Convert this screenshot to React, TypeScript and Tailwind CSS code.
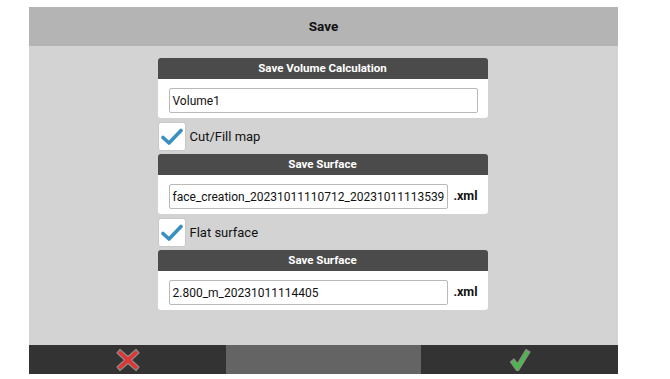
import React from 'react'

const font = { fontFamily: 'Roboto, "Liberation Sans", sans-serif' }

function Header({ title }: { title: string }) {
  return (
    <div className="h-[21px] rounded-t-[3px] bg-[#4b4b4b] flex items-center justify-center text-white text-[11.5px] font-bold">
      {title}
    </div>
  )
}

function Check({ label }: { label: string }) {
  return (
    <div className="flex items-center h-[29px] mt-[4px] mb-[3px]">
      <div className="w-[28px] h-[29px] bg-white border border-[#c8c8c8] rounded-[3px] flex items-center justify-center">
        <svg width="22" height="18" viewBox="0 0 22 18">
          <path d="M2 9.5 L8 15 L20 2.5" fill="none" stroke="#3b8fc0" strokeWidth="3.6" strokeLinecap="round" strokeLinejoin="round" />
        </svg>
      </div>
      <span className="ml-[4px] text-[13px] text-[#111]">{label}</span>
    </div>
  )
}

function Field({ value, xml }: { value: string; xml?: boolean }) {
  return (
    <div className="bg-white rounded-b-[3px] pl-[11px] pr-[10px] pt-[9px] pb-[5px] flex items-center">
      <div className={`h-[25px] border border-[#b9b9b9] rounded-[2px] flex items-center px-[3px] text-[12px] text-[#111] overflow-hidden whitespace-nowrap ${xml ? 'w-[282px]' : 'flex-1'}`}>
        {value}
      </div>
      {xml && <span className="ml-[5px] text-[12.5px] font-bold text-[#111]">.xml</span>}
    </div>
  )
}

export default function App() {
  return (
    <div className="w-[670px] h-[379px] bg-white pt-[7px] pl-[29px]" style={font}>
      <div className="w-[589px] flex flex-col">
        <div className="h-[39px] bg-[#b4b4b4] flex items-center justify-center text-[13.5px] font-bold text-[#111]">Save</div>
        <div className="h-[299px] bg-[#d3d3d3] flex flex-col items-center pt-[12px]">
          <div className="w-[330px] ml-[-2px]">
            <Header title="Save Volume Calculation" />
            <Field value="Volume1" />
            <Check label="Cut/Fill map" />
            <Header title="Save Surface" />
            <Field value="face_creation_20231011110712_20231011113539" xml />
            <Check label="Flat surface" />
            <Header title="Save Surface" />
            <Field value="2.800_m_20231011114405" xml />
          </div>
        </div>
        <div className="h-[29px] flex">
          <div className="w-[197px] bg-[#333333] flex items-center justify-center">
            <svg width="24" height="24" viewBox="0 0 24 24">
              <path d="M4 1.5 L12 8.5 L20 1.5 L23 5 L15.5 12 L23 19 L20 22.5 L12 15.5 L4 22.5 L1 19 L8.5 12 L1 5 Z" fill="#e03535" stroke="#8a8a8a" strokeWidth="1.2" strokeLinejoin="round" />
            </svg>
          </div>
          <div className="w-[195px] bg-[#646464]" />
          <div className="w-[197px] bg-[#333333] flex items-center justify-center">
            <svg width="22" height="24" viewBox="0 0 22 24">
              <path d="M1.5 14 L5 11 L8.5 15.5 L17 1.5 L21 4 L9.5 22.5 L7.5 22.5 Z" fill="#4cb84c" stroke="#8a8a8a" strokeWidth="1.2" strokeLinejoin="round" />
            </svg>
          </div>
        </div>
      </div>
    </div>
  )
}
